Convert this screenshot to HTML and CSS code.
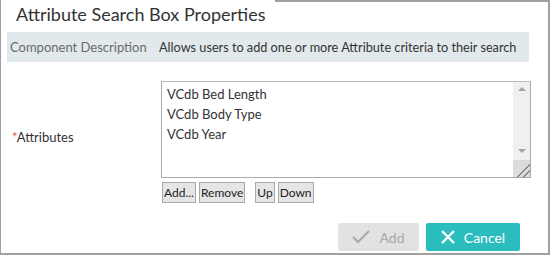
FILE: index.html
```html
<html>
<head>
<title>Attribute Search Box Properties</title>
<link rel="stylesheet" href="styles.css">
</head>
<body>
<div class="dialog">
  <h1 class="title">Attribute Search Box Properties</h1>
  <div class="desc">
    <span class="desc-label">Component Description</span>
    <span class="desc-text">Allows users to add one or more Attribute criteria to their search</span>
  </div>
  <div class="field">
    <div class="field-label"><span class="req">*</span>Attributes</div>
    <div class="field-control">
      <div class="listbox">
        <ul class="items">
          <li>VCdb Bed Length</li>
          <li>VCdb Body Type</li>
          <li>VCdb Year</li>
        </ul>
        <div class="scrollbar">
          <span class="arrow up"></span>
          <span class="arrow down"></span>
          <span class="grip"></span>
        </div>
      </div>
      <div class="tools">
        <button class="btn">Add...</button>
        <button class="btn">Remove</button>
        <button class="btn sep">Up</button>
        <button class="btn">Down</button>
      </div>
    </div>
  </div>
  <div class="actions">
    <button class="act disabled">
      <svg width="18" height="14" viewBox="0 0 18 14"><path d="M1 7 L6 12 L17 1" fill="none" stroke="#a8a8a8" stroke-width="2"/></svg>
      Add
    </button>
    <button class="act cancel">
      <svg width="14" height="14" viewBox="0 0 14 14"><path d="M1 1 L13 13 M13 1 L1 13" fill="none" stroke="#fff" stroke-width="2.4"/></svg>
      Cancel
    </button>
  </div>
</div>
</body>
</html>
```

FILE: styles.css
```css
body { margin:0; background:#fff; font-family:Lato, "Open Sans", Arial, sans-serif; color:#333; }
.dialog { position:relative; width:550px; height:255px; box-sizing:border-box; border-left:1px solid #a0a0a0; border-right:2px solid #a0a0a0; border-bottom:2px solid #a0a0a0; }
.dialog::before { content:""; position:absolute; left:274px; right:0; top:0; height:2px; background:#a0a0a0; }
.title { margin:0; padding:1px 0 0 15px; height:31px; font-size:18px; font-weight:normal; line-height:26px; color:#333; }
.desc { display:flex; margin-left:6px; width:522px; height:30px; background:#e1e9ec; align-items:center; font-size:13px; white-space:nowrap; }
.desc-label { width:149px; padding-left:3px; color:#6a6a6a; }
.desc-text { color:#333; font-size:12.7px; }
.field { display:flex; margin-top:19px; }
.field-label { width:160px; padding:48px 0 0 11px; box-sizing:border-box; font-size:13px; }
.req { color:#d9534f; }
.field-control { width:370px; }
.listbox { display:flex; height:97px; border:1px solid #aaa; border-top-color:#bbb; box-sizing:border-box; }
.items { flex:1; margin:0; padding:2px 0 0 5px; list-style:none; font-size:13px; line-height:20px; }
.scrollbar { position:relative; width:17px; background:#f0f0f0; }
.arrow { position:absolute; left:5px; width:0; height:0; border-left:4px solid transparent; border-right:4px solid transparent; }
.arrow.up { top:5px; border-bottom:4px solid #a3a3a3; }
.arrow.down { top:67px; border-top:4px solid #a3a3a3; }
.grip { position:absolute; left:0; right:0; bottom:0; height:17px; background:#dcdcdc linear-gradient(135deg, transparent 60%, #888 61%, #888 66%, transparent 67%, transparent 78%, #888 79%, #888 84%, transparent 85%); }
.tools { display:flex; margin-top:4px; padding-left:1px; gap:3px; }
.btn { height:21px; padding:0 1px; font-family:inherit; font-size:12px; color:#222; background:#e5e5e5; border:1px solid #a8a8a8; border-radius:0; }
.sep { margin-left:7px; }
.actions { display:flex; justify-content:flex-end; gap:7px; margin-top:20px; padding-right:28px; }
.act { display:flex; align-items:center; justify-content:center; gap:9px; height:28px; border:none; border-radius:2px; font-family:inherit; font-size:14px; }
.act.disabled { width:81px; background:#e2e2e2; color:#a8a8a8; }
.act.cancel { width:94px; background:#2bbdbd; color:#fff; }
```
